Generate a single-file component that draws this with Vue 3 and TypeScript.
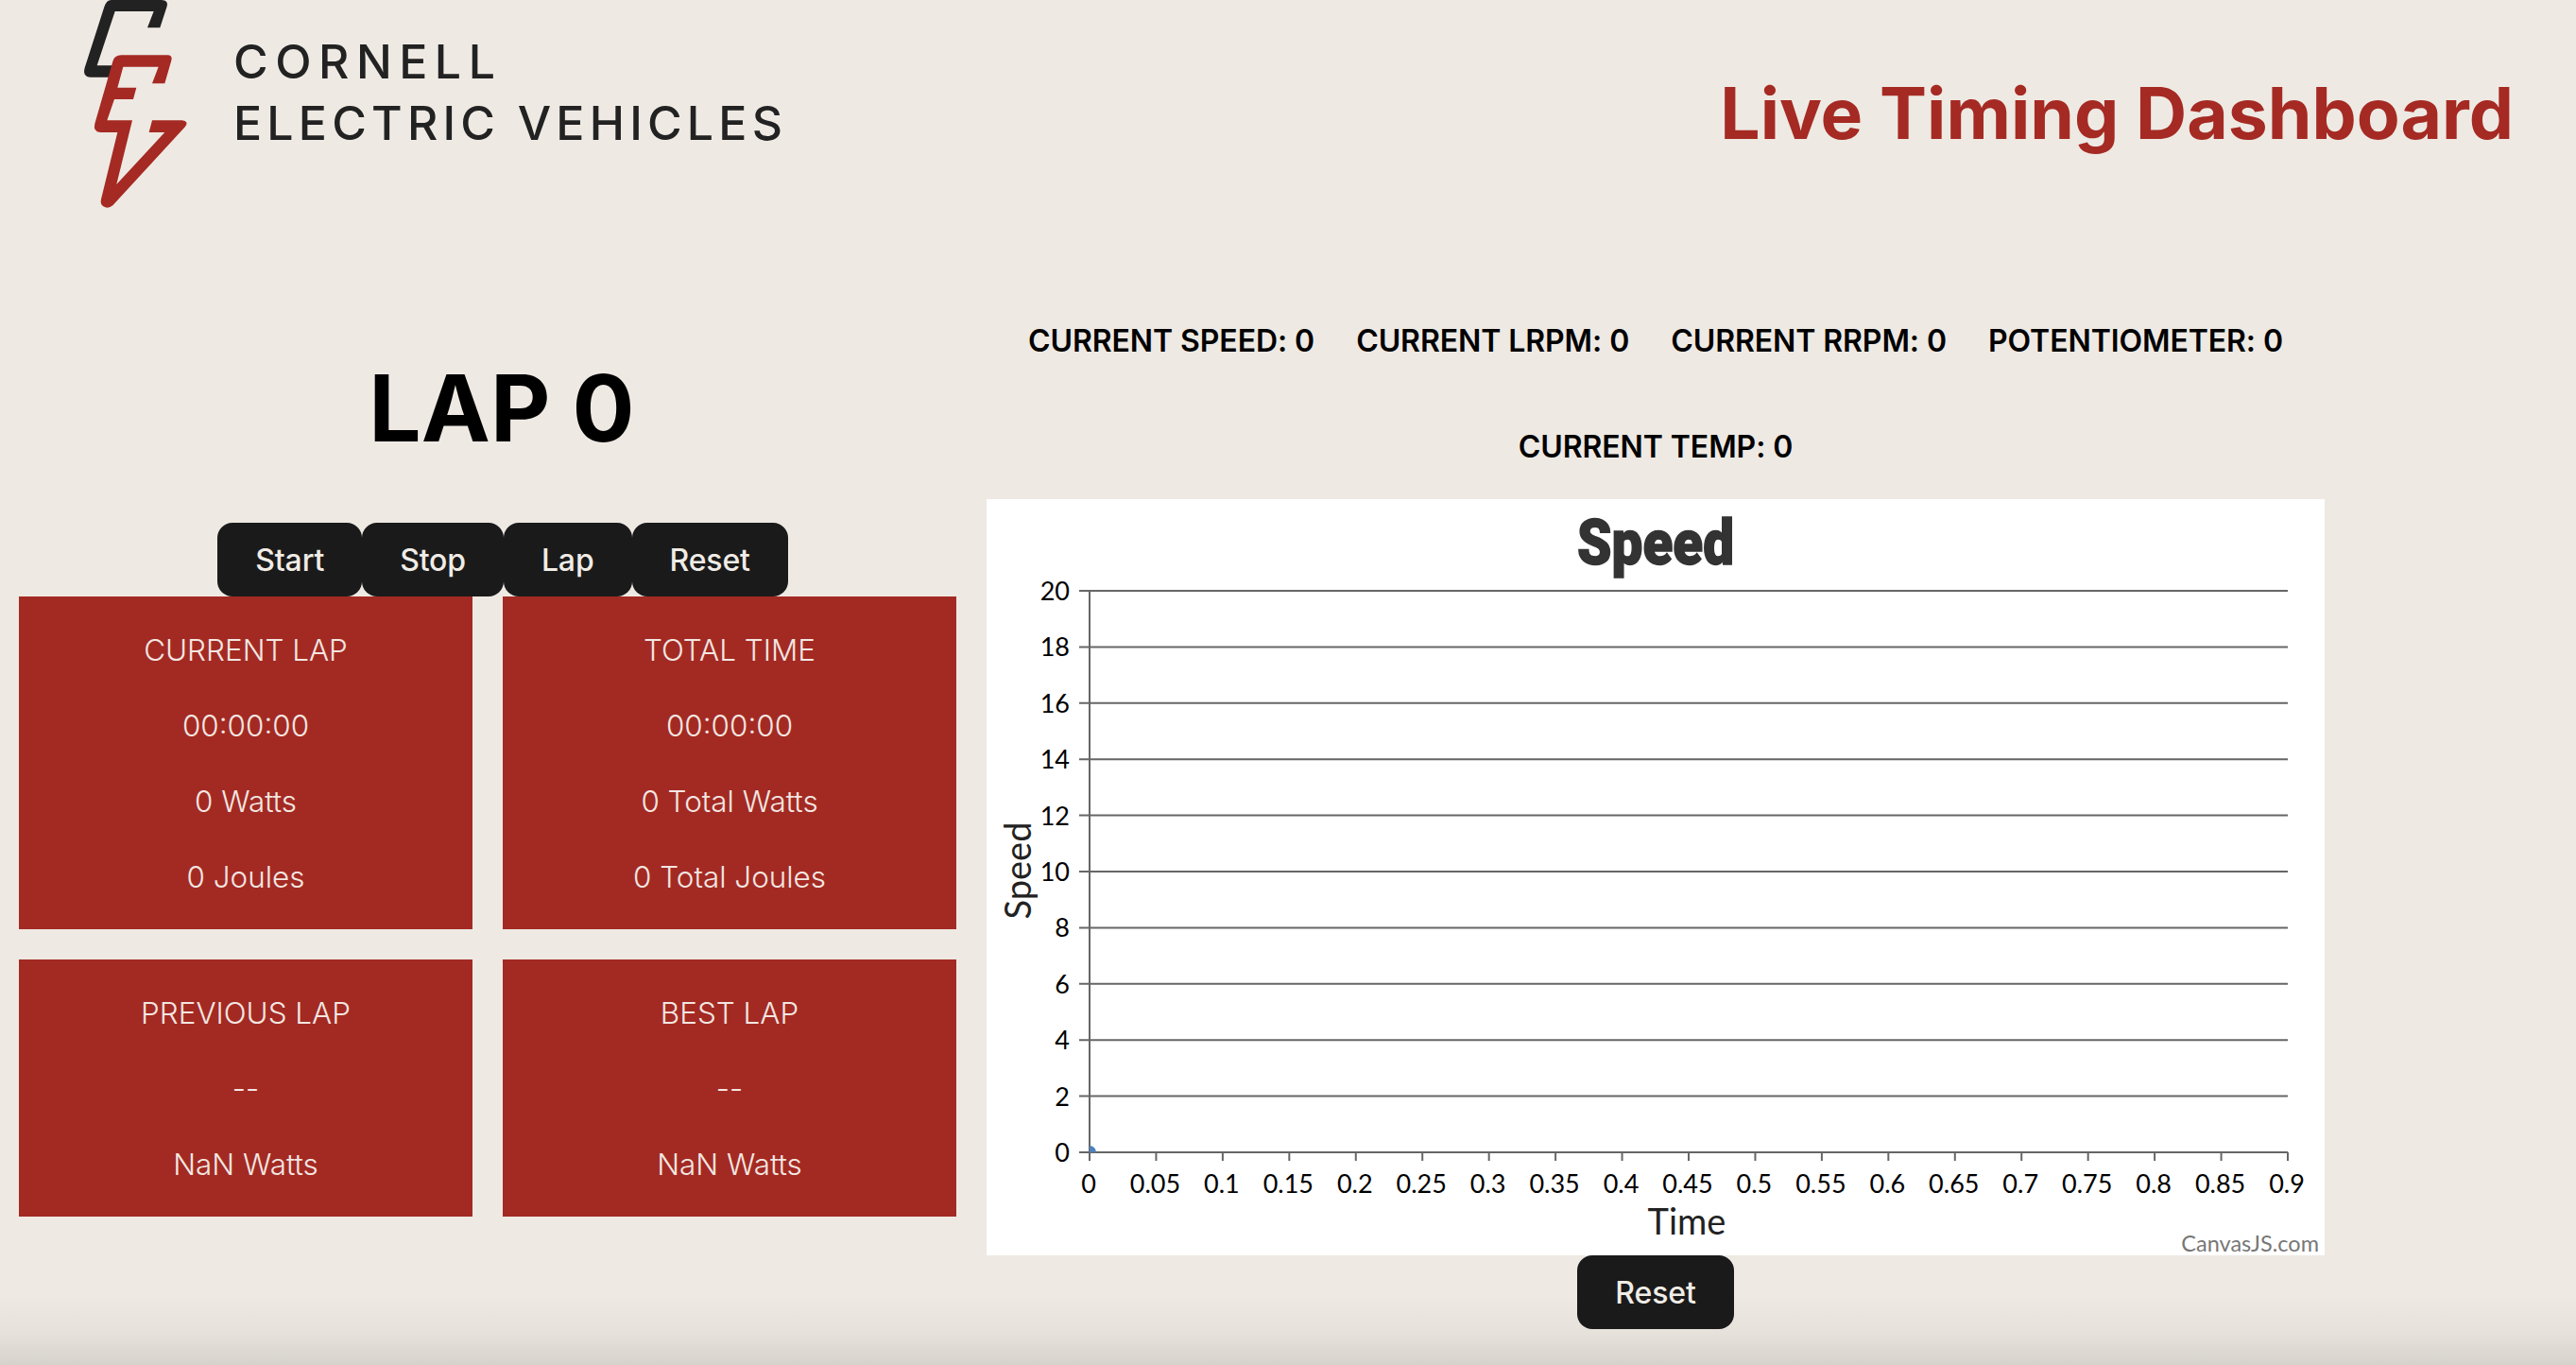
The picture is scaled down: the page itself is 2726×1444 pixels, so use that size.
<script setup lang="ts">
const stats = [
  'CURRENT SPEED: 0',
  'CURRENT LRPM: 0',
  'CURRENT RRPM: 0',
  'POTENTIOMETER: 0',
  'CURRENT TEMP: 0',
]

const controls = ['Start', 'Stop', 'Lap', 'Reset']

const laps = [
  { id: 'current', lines: ['CURRENT LAP', '00:00:00', '0 Watts', '0 Joules'] },
  { id: 'total', lines: ['TOTAL TIME', '00:00:00', '0 Total Watts', '0 Total Joules'] },
  { id: 'previous', lines: ['PREVIOUS LAP', '--', 'NaN Watts'] },
  { id: 'best', lines: ['BEST LAP', '--', 'NaN Watts'] },
]

// plot area inside the 1416x800 chart
const plot = { left: 109, right: 1377, top: 97, bottom: 691 }

const yTicks = Array.from({ length: 11 }, (_, i) => ({
  label: String(i * 2),
  y: plot.bottom - (i * (plot.bottom - plot.top)) / 10,
}))

const xTicks = Array.from({ length: 19 }, (_, i) => ({
  label: String(Number((i * 0.05).toFixed(2))),
  x: plot.left + (i * (plot.right - plot.left)) / 18,
}))
</script>

<template>
  <div class="page">
    <header class="top">
      <div class="brand">
        <svg class="logo" viewBox="0 0 480 690" width="160" height="230" aria-hidden="true">
          <path
            fill="#222222"
            d="M140 0 L300 0 Q322 0 317 20 L295 88 L255 88 L275 36 L152 36 L95 208 L150 208 L140 245 L75 245 Q48 243 56 215 L118 22 Q125 0 140 0 Z"
          />
          <path
            fill="#a52a23"
            d="M172 175 L318 175 Q336 175 331 192 L310 265 L270 265 L290 212 L178 212 L160 278 L220 278 L210 315 L150 315 L127 382 L207 382 L157 585 L310 420 L260 420 L270 382 L365 382 Q388 385 375 402 L145 652 Q130 665 115 655 Q104 648 108 632 L160 420 L105 420 Q82 418 88 392 L145 195 Q150 175 172 175 Z"
          />
        </svg>
        <div class="brand-name">
          <span class="brand-first">CORNELL</span>
          <span class="brand-second">ELECTRIC VEHICLES</span>
        </div>
      </div>
      <h1 class="title">Live Timing Dashboard</h1>
    </header>

    <main class="content">
      <section class="timer">
        <h2 class="lap-count">LAP 0</h2>
        <div class="controls">
          <button v-for="label in controls" :key="label" class="btn" type="button">{{ label }}</button>
        </div>
        <div class="cards">
          <div v-for="lap in laps" :key="lap.id" class="card">
            <p v-for="line in lap.lines" :key="line">{{ line }}</p>
          </div>
        </div>
      </section>

      <section class="telemetry">
        <div class="stats">
          <p v-for="stat in stats" :key="stat">{{ stat }}</p>
        </div>

        <svg class="chart" viewBox="0 0 1416 800" width="1416" height="800">
          <rect width="1416" height="800" fill="#ffffff" />
          <text class="chart-title" x="708" y="69" text-anchor="middle" textLength="166" lengthAdjust="spacingAndGlyphs">Speed</text>

          <g v-for="tick in yTicks" :key="tick.label">
            <line class="axis" :x1="plot.left - 11" :x2="plot.right" :y1="tick.y" :y2="tick.y" />
            <text class="tick" x="88" :y="tick.y + 10" text-anchor="end">{{ tick.label }}</text>
          </g>
          <line class="axis" :x1="plot.left" :x2="plot.left" :y1="plot.top" :y2="plot.bottom + 9" />

          <g v-for="tick in xTicks" :key="tick.label">
            <line class="axis" :x1="tick.x" :x2="tick.x" :y1="plot.bottom" :y2="plot.bottom + 9" />
            <text class="tick" :x="tick.x - 1" y="734" text-anchor="middle">{{ tick.label }}</text>
          </g>

          <path d="M109 691 L109 684 A7 7 0 0 1 116 691 Z" fill="#4f81bc" />

          <text class="axis-title" x="0" y="0" text-anchor="middle" transform="translate(47 393) rotate(-90)">Speed</text>
          <text class="axis-title" x="741" y="778" text-anchor="middle">Time</text>
          <text class="credit" x="1410" y="796" text-anchor="end">CanvasJS.com</text>
        </svg>

        <button class="btn" type="button">Reset</button>
      </section>
    </main>
  </div>
</template>

<style>
html,
body {
  margin: 0;
  height: 100%;
  background: linear-gradient(to bottom, #eee9e3 0, #eee9e3 1370px, #e6e1db 1410px, #d6d2cc 1444px);
}
</style>

<style scoped>
.page {
  height: 1444px;
  overflow: hidden;
  font-family: Inter, "Liberation Sans", sans-serif;
}

.top {
  display: flex;
  justify-content: space-between;
  height: 342px;
  padding: 0 66px 0 71px;
  box-sizing: border-box;
}

.brand {
  display: flex;
  align-items: flex-start;
  gap: 16px;
}

.logo {
  flex: none;
}

.brand-name {
  display: flex;
  flex-direction: column;
  gap: 5px;
  padding-top: 35px;
  color: #222222;
  font-size: 50px;
  line-height: 60px;
  font-weight: 500;
  white-space: nowrap;
}

.brand-first {
  letter-spacing: 7.5px;
}

.brand-second {
  letter-spacing: 5.2px;
}

.title {
  margin: 0;
  padding-top: 74px;
  color: #a52a23;
  font-size: 75px;
  line-height: 92px;
  font-weight: 700;
}

.content {
  display: grid;
  grid-template-columns: 1044px 1416px;
}

.timer {
  display: flex;
  flex-direction: column;
  padding-top: 29px;
}

.lap-count {
  margin: 0 0 61px;
  padding-left: 18px;
  color: #000000;
  font-size: 98px;
  line-height: 121px;
  font-weight: 700;
  text-align: center;
}

.controls {
  display: flex;
  justify-content: center;
  padding-left: 20px;
}

.btn {
  height: 78px;
  padding: 0 40px;
  border: none;
  border-radius: 16px;
  background: #1a1a1a;
  color: #f0ece6;
  font-family: inherit;
  font-size: 32px;
  letter-spacing: -0.15px;
  font-weight: 500;
}

.cards {
  display: grid;
  grid-template-columns: 480px 480px;
  gap: 32px;
  margin-left: 20px;
}

.card {
  display: flex;
  flex-direction: column;
  gap: 40px;
  padding: 37px 0 35px;
  background: #a32a23;
  color: #f3e7e2;
  font-size: 31.4px;
  line-height: 40px;
  font-weight: 300;
  text-align: center;
}

.card p {
  margin: 0;
}

.telemetry {
  display: flex;
  flex-direction: column;
  align-items: center;
  margin-top: -1px;
}

.stats {
  display: flex;
  flex-wrap: wrap;
  justify-content: center;
  gap: 72px 44px;
  margin-bottom: 35px;
  color: #000000;
  font-size: 32px;
  line-height: 40px;
  letter-spacing: -0.08px;
  font-weight: 600;
}

.stats p {
  margin: 0;
}

.chart {
  display: block;
  flex: none;
}

.axis {
  stroke: #666666;
  stroke-width: 2;
}

.chart-title {
  fill: #333333;
  stroke: #333333;
  stroke-width: 1.5;
  font-family: Roboto, sans-serif;
  font-size: 66px;
  font-weight: 900;
}

.tick {
  fill: #000000;
  font-family: Lato, sans-serif;
  font-size: 27px;
}

.axis-title {
  fill: #222222;
  font-family: Lato, sans-serif;
  font-size: 38px;
}

.credit {
  fill: #777777;
  font-family: Lato, sans-serif;
  font-size: 23.5px;
}
</style>
